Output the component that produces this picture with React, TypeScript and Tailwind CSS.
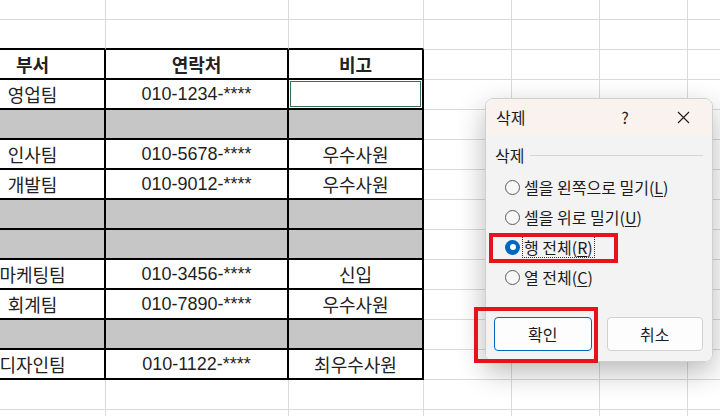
import React from 'react';

type TableRow = {
  dept?: string;
  phone?: string;
  note?: string;
  grey?: boolean;
  header?: boolean;
  selected?: boolean;
};

const colW = ['w-[145px]', 'w-[183px]', 'w-[135px]', 'w-[88px]', 'w-[88px]', 'w-[88px]', 'w-[88px]'];

// sheet rows 2..12 hold the table
const tableRows: TableRow[] = [
  { header: true, dept: '부서', phone: '연락처', note: '비고' },
  { dept: '영업팀', phone: '010-1234-****', selected: true },
  { grey: true },
  { dept: '인사팀', phone: '010-5678-****', note: '우수사원' },
  { dept: '개발팀', phone: '010-9012-****', note: '우수사원' },
  { grey: true },
  { grey: true },
  { dept: '마케팅팀', phone: '010-3456-****', note: '신입' },
  { dept: '회계팀', phone: '010-7890-****', note: '우수사원' },
  { grey: true },
  { dept: '디자인팀', phone: '010-1122-****', note: '최우수사원' },
];

const ko = "font-['Noto_Sans_CJK_KR',sans-serif]";

const GridCell: React.FC<{ col: number; tableTop?: boolean }> = ({ col, tableTop }) => (
  <div
    className={`${colW[col]} shrink-0 h-[30px] ${
      tableTop
        ? 'border-r border-r-[#dadada] border-b-2 border-b-black'
        : 'border-r border-b border-[#dadada]'
    }`}
  />
);

const TableCell: React.FC<{ col: number; row: TableRow }> = ({ col, row }) => {
  const text = col === 0 ? row.dept : col === 1 ? row.phone : row.note;
  return (
    <div
      className={`${colW[col]} shrink-0 h-[30px] border-r-2 border-b-2 border-black flex items-center justify-center ${
        row.grey ? 'bg-[#c6c6c6]' : 'bg-white'
      }`}
    >
      {row.selected && col === 2 ? (
        <div className="m-px flex-1 self-stretch border border-[#3a6f52]" />
      ) : col === 1 && !row.header ? (
        <span className="font-['Liberation_Sans',Arial,sans-serif] text-[18px] text-[#1f1f1f] leading-none">{text}</span>
      ) : (
        <span className={`${ko} text-[18px] leading-none text-[#222] ${row.header ? 'font-bold' : ''}`}>{text}</span>
      )}
    </div>
  );
};

const Radio: React.FC<{ checked?: boolean; label: string; keyChar: string; focus?: boolean }> = ({
  checked,
  label,
  keyChar,
  focus,
}) => (
  <div className="h-[30px] flex items-center gap-[4px]">
    {checked ? (
      <span className="w-[15px] h-[15px] rounded-full bg-[#0067c0] flex items-center justify-center">
        <span className="w-[6px] h-[6px] rounded-full bg-white" />
      </span>
    ) : (
      <span className="w-[15px] h-[15px] rounded-full border border-[#5c5c5c] bg-[#f7f7f7]" />
    )}
    <span className={`leading-[18px] ${focus ? 'outline-1 outline-dotted outline-[#333] outline-offset-1' : ''}`}>
      {label}(<span className="underline underline-offset-2">{keyChar}</span>)
    </span>
  </div>
);

export default function App() {
  const rows = Array.from({ length: 15 }, (_, i) => i);

  return (
    <div className="relative w-[720px] h-[416px] overflow-hidden bg-white">
      {/* spreadsheet */}
      <div className="-ml-[39px] -mt-[10px] flex flex-col">
        {rows.map((r) => {
          const t = r >= 2 && r <= 12 ? tableRows[r - 2] : undefined;
          return (
            <div key={r} className="flex h-[30px]">
              {colW.map((_, c) =>
                t && c < 3 ? (
                  <TableCell key={c} col={c} row={t} />
                ) : (
                  <GridCell key={c} col={c} tableTop={r === 1 && c < 3} />
                )
              )}
            </div>
          );
        })}
      </div>

      {/* delete dialog */}
      <div
        className={`absolute left-[485px] top-[98px] w-[228px] h-[264px] rounded-[8px] overflow-hidden border border-[#cfcfcf] shadow-[0_10px_28px_rgba(0,0,0,0.28)] flex flex-col ${ko} text-[16px] text-[#1b1b1b]`}
      >
        <div className="h-[36px] shrink-0 flex items-center bg-[#f9f2ef]">
          <span className="flex-1 pl-[10px] leading-none">삭제</span>
          <span className="w-[58px] flex justify-center leading-none">?</span>
          <span className="w-[58px] flex justify-center">
            <svg width="13" height="13" viewBox="0 0 13 13" fill="none" stroke="#1b1b1b" strokeWidth="1.1">
              <path d="M1 1L12 12M12 1L1 12" />
            </svg>
          </span>
        </div>
        <div className="flex-1 bg-[#f3f3f3] flex flex-col pt-[10px] pl-[8px] pr-[9px]">
          <div className="h-[20px] flex items-center gap-[6px] pl-px">
            <span className="leading-none">삭제</span>
            <div className="flex-1 h-px bg-[#d6d6d6]" />
          </div>
          <div className="mt-[7px] pl-[11px] flex flex-col">
            <Radio label="셀을 왼쪽으로 밀기" keyChar="L" />
            <Radio label="셀을 위로 밀기" keyChar="U" />
            <Radio label="행 전체" keyChar="R" checked focus />
            <Radio label="열 전체" keyChar="C" />
          </div>
          <div className="mt-[25px] flex gap-[15px]">
            <button className="w-[98px] h-[34px] rounded-[4px] border border-[#0067c0] bg-[#fdfdfd] leading-none">
              확인
            </button>
            <button className="w-[97px] h-[34px] rounded-[4px] border border-[#d1d1d1] bg-[#fdfdfd] leading-none">
              취소
            </button>
          </div>
        </div>
      </div>

      {/* red highlight boxes */}
      <div className="absolute left-[489px] top-[233px] w-[129px] h-[30px] border-4 border-[#e4141c]" />
      <div className="absolute left-[474px] top-[307px] w-[124px] h-[56px] border-4 border-[#e4141c]" />
    </div>
  );
}
